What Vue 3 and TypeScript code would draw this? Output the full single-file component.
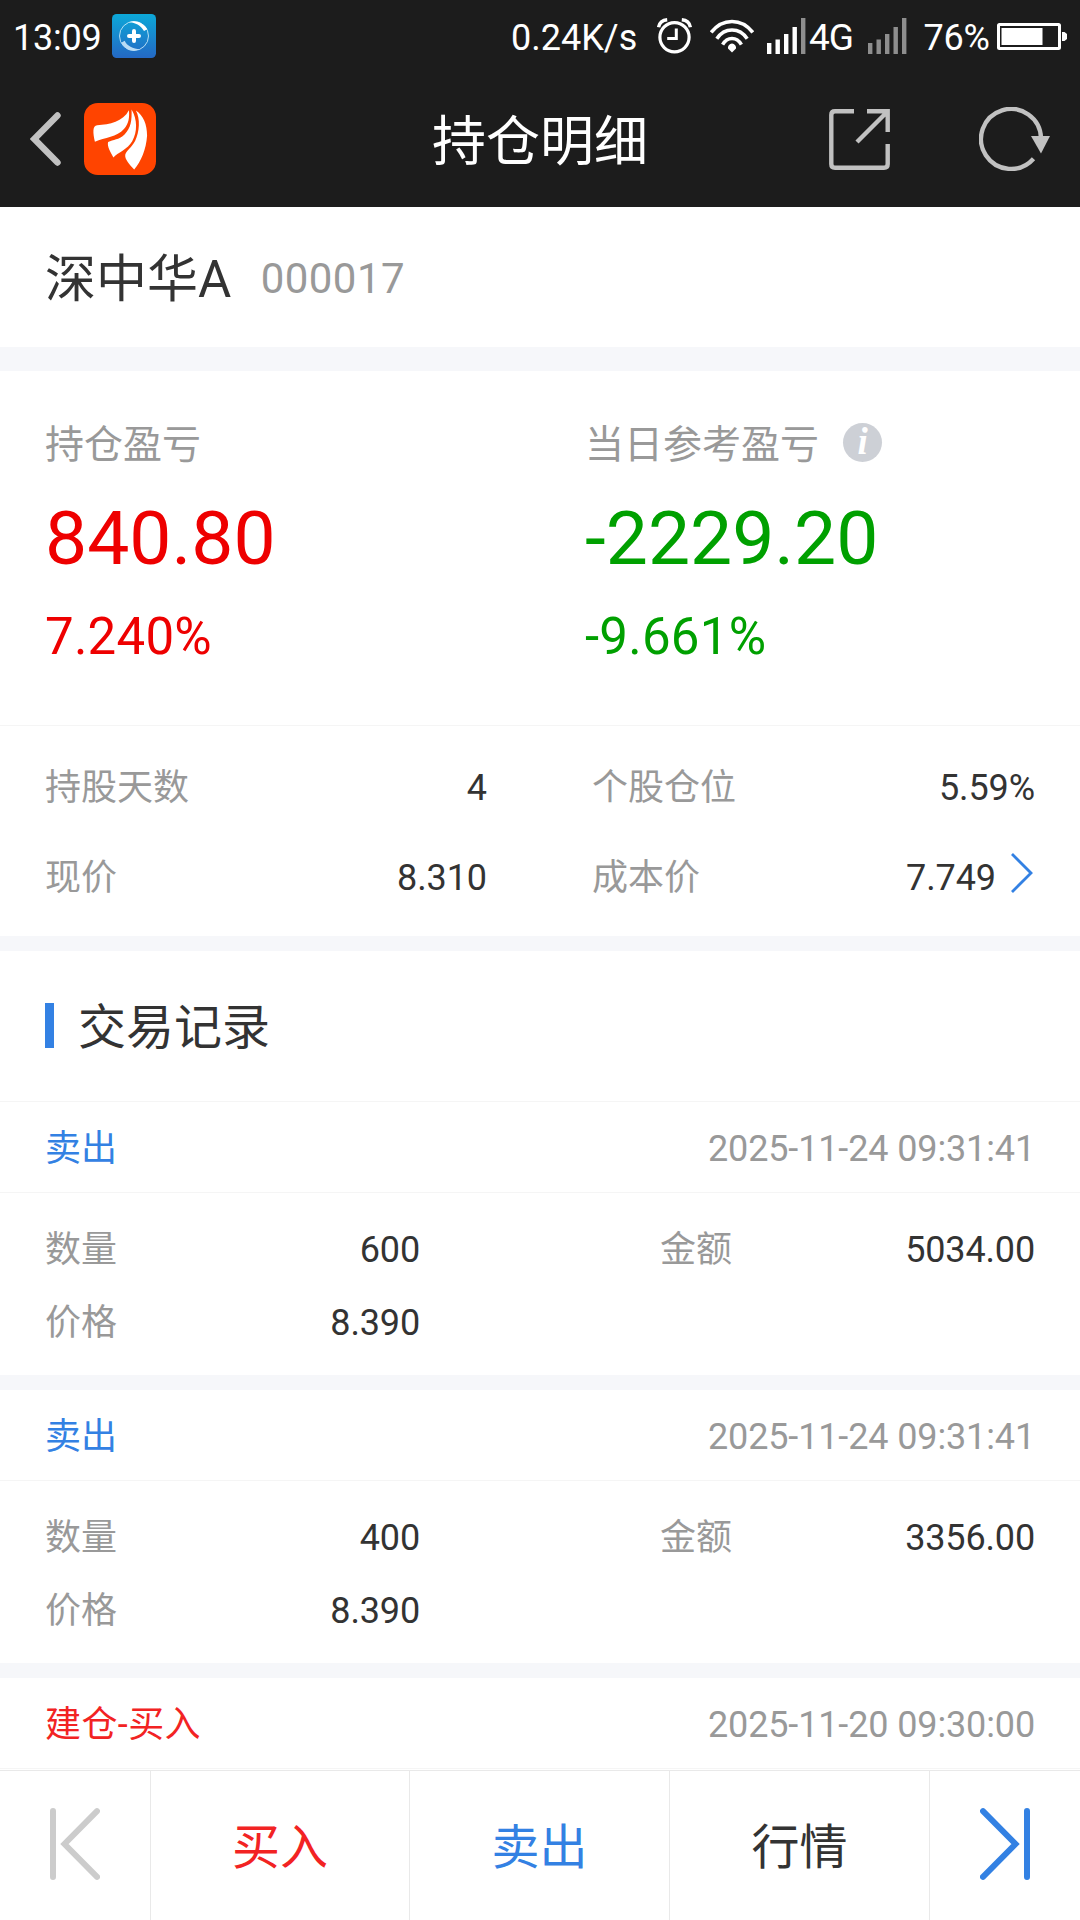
<script setup lang="ts">
interface Trade {
  id: number
  kind: 'buy' | 'sell'
  label: string
  time: string
  quantity?: string
  price?: string
  amount?: string
}

interface SignalBar {
  x: number
  y: number
}

const signalBars: SignalBar[] = [
  { x: 0, y: 25 },
  { x: 8.5, y: 21.5 },
  { x: 17, y: 16 },
  { x: 25.5, y: 9 },
  { x: 34, y: 0 },
]

const trades: Trade[] = [
  { id: 1, kind: 'sell', label: '卖出', time: '2025-11-24 09:31:41', quantity: '600', price: '8.390', amount: '5034.00' },
  { id: 2, kind: 'sell', label: '卖出', time: '2025-11-24 09:31:41', quantity: '400', price: '8.390', amount: '3356.00' },
  { id: 3, kind: 'buy', label: '建仓-买入', time: '2025-11-20 09:30:00' },
]
</script>

<template>
  <div class="screen">
    <header class="top">
      <div class="status">
        <span class="clock">13:09</span>
        <svg class="app-badge" viewBox="0 0 132 132">
          <defs>
            <linearGradient id="badge-fill" x1="0" y1="0" x2="0" y2="1">
              <stop offset="0" stop-color="#0ca8d8" />
              <stop offset="1" stop-color="#2468c4" />
            </linearGradient>
          </defs>
          <rect width="132" height="132" rx="14" fill="url(#badge-fill)" />
          <circle cx="66" cy="66" r="43.5" fill="none" stroke="#d4effa" stroke-width="2.5" />
          <path d="M52 24C72 17 96 28 106 46L96 51C86 34 70 26 52 24Z" fill="#fff" />
          <path d="M28 86L38 80C44 95 64 105 84 105C62 117 38 106 28 86Z" fill="#b9dcf5" />
          <path d="M66 51V81M51 66H81" stroke="#fff" stroke-width="12" stroke-linecap="round" />
        </svg>
        <span class="speed">0.24K/s</span>
        <svg class="alarm" viewBox="0 0 36 36" fill="none" stroke="#fff">
          <circle cx="17.5" cy="19.3" r="14.6" stroke-width="3.2" />
          <path d="M19.3 10.5V20.6H10.2" stroke-width="3" />
          <path d="M1.6 9.2C2.4 5 5.6 2.2 10.2 1.8M33.4 9.2C32.6 5 29.4 2.2 24.8 1.8" stroke-width="3.4" />
        </svg>
        <svg class="wifi" viewBox="0 0 44 34" fill="none" stroke="#fff" stroke-width="3.5">
          <path d="M1.2 13.4C12.5-1.2 31.5-1.2 42.8 13.4" />
          <path d="M6.8 19.8C14.5 8.2 29.5 8.2 37.2 19.8" />
          <path d="M12.6 25.6C17.2 17.4 26.8 17.4 31.4 25.6" />
          <path d="M22 33.5L18 29.6A4.1 4.1 0 1 1 26 29.6Z" fill="#fff" stroke="none" />
        </svg>
        <svg class="signal" viewBox="0 0 39 36">
          <rect
            v-for="(bar, i) in signalBars"
            :key="bar.x"
            :x="bar.x"
            :y="bar.y"
            width="4.4"
            :height="36 - bar.y"
            :fill="i < 4 ? '#fff' : '#8e8e8e'"
          />
        </svg>
        <span class="network">4G</span>
        <svg class="signal second" viewBox="0 0 39 36">
          <rect
            v-for="bar in signalBars"
            :key="bar.x"
            :x="bar.x"
            :y="bar.y"
            width="4.4"
            :height="36 - bar.y"
            fill="#8e8e8e"
          />
        </svg>
        <span class="percent">76%</span>
        <svg class="battery" viewBox="0 0 70 27">
          <rect x="1.5" y="1.5" width="61" height="24" rx="1" fill="none" stroke="#fff" stroke-width="3" />
          <rect x="4.5" y="5" width="41" height="17" fill="#fff" />
          <path d="M65 9H67.5L70 11V16L67.5 18H65Z" fill="#fff" />
        </svg>
      </div>

      <nav class="bar">
        <div class="bar-side">
          <svg class="back" viewBox="0 0 32 54" fill="none" stroke="#c1c1c1" stroke-width="6.4" stroke-linecap="round">
            <path d="M27.5 3.5L4.3 27L27.5 50.5" />
          </svg>
          <svg class="logo" viewBox="252 309 218 218">
            <rect x="252" y="309" width="218" height="218" rx="42" fill="#ff4400" />
            <g fill="#fff">
              <path d="M388 331C370 366 330 374 292 376C277 378 279 398 285 426C315 414 352 412 373 388C388 371 390 352 388 331Z" />
              <path d="M396 329C397 360 395 385 374 405C357 421 341 419 325 427C321 440 333 458 341 474C356 458 384 450 398 425C414 397 414 359 396 329Z" />
              <path d="M409 332C432 347 443 374 443 408C440 450 425 485 404 510C391 497 374 479 377 465C381 452 397 443 407 423C420 397 423 357 409 332Z" />
            </g>
          </svg>
        </div>
        <h1 class="title">持仓明细</h1>
        <div class="bar-side actions">
          <svg class="share" viewBox="0 0 61 61" fill="none" stroke="#c1c1c1" stroke-width="4.4">
            <path d="M25 2.3H6Q2.3 2.3 2.3 6V55Q2.3 58.7 6 58.7H55Q58.7 58.7 58.7 55V35M38 2.3H58.7V23M57 4L28 33" />
          </svg>
          <svg class="refresh" viewBox="0 0 72 64">
            <path d="M62 31A30 30 0 1 0 54.5 51.8" fill="none" stroke="#c1c1c1" stroke-width="4.4" />
            <path d="M52 29H71L62 46.5Z" fill="#c1c1c1" />
          </svg>
        </div>
      </nav>
    </header>

    <main class="content">
      <section class="stock">
        <span class="stock-name">深中华A</span>
        <span class="stock-code">000017</span>
      </section>

      <section class="profit">
        <div class="profit-col up">
          <div class="profit-label">持仓盈亏</div>
          <div class="profit-value">840.80</div>
          <div class="profit-rate">7.240%</div>
        </div>
        <div class="profit-col down">
          <div class="profit-label">
            <span>当日参考盈亏</span>
            <span class="info">i</span>
          </div>
          <div class="profit-value">-2229.20</div>
          <div class="profit-rate">-9.661%</div>
        </div>
      </section>

      <section class="facts">
        <div class="fact"><span class="key">持股天数</span><span>4</span></div>
        <div class="fact"><span class="key">个股仓位</span><span>5.59%</span></div>
        <div class="fact"><span class="key">现价</span><span>8.310</span></div>
        <div class="fact">
          <span class="key">成本价</span>
          <span>7.749</span>
          <svg class="more" viewBox="0 0 22 40" fill="none" stroke="#3381e3" stroke-width="2.8">
            <path d="M1 1L20 20L1 39" />
          </svg>
        </div>
      </section>

      <section class="records">
        <h2 class="records-title"><span>交易记录</span></h2>
        <article v-for="trade in trades" :key="trade.id" class="trade">
          <div class="trade-head">
            <span class="label" :class="trade.kind">{{ trade.label }}</span>
            <time class="key">{{ trade.time }}</time>
          </div>
          <div v-if="trade.quantity" class="trade-body">
            <div class="cell"><span class="key">数量</span><span class="num">{{ trade.quantity }}</span></div>
            <div class="cell"><span class="key">金额</span><span class="num">{{ trade.amount }}</span></div>
            <div class="cell"><span class="key">价格</span><span class="num">{{ trade.price }}</span></div>
          </div>
        </article>
      </section>
    </main>

    <footer class="toolbar">
      <button class="tool" type="button">
        <svg class="jump" viewBox="0 0 50 72" fill="none" stroke="#cccccc" stroke-width="6" stroke-linecap="round">
          <path d="M3 3V69M47 3.2L14.5 36L47 68.8" />
        </svg>
      </button>
      <button class="tool text buy" type="button">买入</button>
      <button class="tool text sell" type="button">卖出</button>
      <button class="tool text" type="button">行情</button>
      <button class="tool" type="button">
        <svg class="jump" viewBox="0 0 50 72" fill="none" stroke="#3381e3" stroke-width="6" stroke-linecap="round">
          <path d="M47 3V69M3 3.2L35.5 36L3 68.8" />
        </svg>
      </button>
    </footer>
  </div>
</template>

<style>
body {
  background: #fff;
}
</style>

<style scoped>
.screen {
  display: flex;
  flex-direction: column;
  width: 1080px;
  height: 1920px;
  overflow: hidden;
  background: #fff;
  color: #333;
  font-family: Roboto, 'Noto Sans CJK SC', sans-serif;
  font-size: 36px;
  line-height: 54px;
}

svg {
  display: block;
  flex: none;
}

.top {
  flex: none;
  height: 207px;
  background: #1c1c1c;
  color: #fff;
}

.status {
  display: flex;
  align-items: center;
  height: 72px;
  padding-left: 13px;
  white-space: nowrap;
}

.status span {
  flex: none;
  padding-top: 3px;
}

.clock {
  width: 99px;
  letter-spacing: -0.25px;
}

.app-badge {
  width: 44px;
  height: 44px;
}

.speed {
  width: 146px;
  margin-left: 355px;
}

.alarm {
  width: 36px;
  height: 36px;
  margin-right: 17px;
}

.wifi {
  width: 44px;
  height: 34px;
  margin-right: 13px;
}

.signal {
  width: 39px;
  height: 36px;
}

.network {
  width: 59px;
  margin-left: 3px;
  font-size: 37px;
  letter-spacing: -1px;
}

.percent {
  width: 73px;
  margin-left: 16.5px;
  letter-spacing: -0.2px;
}

.status .percent {
  padding-top: 4px;
}

.battery {
  width: 70px;
  height: 27px;
}

.bar {
  display: flex;
  align-items: center;
  justify-content: space-between;
  height: 134px;
}

.bar-side {
  display: flex;
  align-items: center;
  width: 251px;
}

.back {
  width: 32px;
  height: 54px;
  margin-left: 30px;
}

.logo {
  width: 72px;
  height: 72px;
  margin-left: 22px;
}

.title {
  margin: 0;
  padding-top: 7px;
  font-size: 54px;
  font-weight: 400;
  line-height: 80px;
}

.share {
  width: 61px;
  height: 61px;
}

.refresh {
  width: 72px;
  height: 64px;
  margin-left: 89px;
}

.content {
  flex: 1;
  min-height: 0;
  overflow: hidden;
}

.stock {
  display: flex;
  align-items: center;
  height: 140px;
  padding: 0 45px;
  border-bottom: 24px solid #f6f7fa;
}

.stock-name {
  padding-top: 6px;
  font-size: 51px;
  line-height: 72px;
}

.stock-code {
  margin-left: 29.5px;
  padding-top: 4px;
  color: #999;
  font-size: 42px;
  letter-spacing: 0.42px;
}

.profit {
  display: flex;
  height: 355px;
  padding-top: 38px;
  padding-left: 45px;
  border-bottom: 1px solid #f5f5f5;
  box-sizing: border-box;
}

.profit-col {
  flex: none;
  width: 540px;
}

.down.profit-col {
  width: 495px;
}

.profit-label {
  display: flex;
  align-items: center;
  height: 72px;
  color: #999;
  font-size: 39px;
}

.info {
  width: 39px;
  height: 39px;
  margin-bottom: 5px;
  margin-left: 24px;
  border-radius: 50%;
  background: #cdd0d6;
  color: #fff;
  font: italic bold 37px/37px 'Liberation Serif', serif;
  text-align: center;
}

.profit-value {
  font-size: 75px;
  line-height: 114px;
}

.profit-rate {
  font-size: 51px;
  line-height: 84px;
  letter-spacing: 0.25px;
}

.up .profit-value,
.up .profit-rate {
  color: #ee0000;
}

.down .profit-value,
.down .profit-rate {
  color: #00a000;
}

.facts {
  display: grid;
  grid-template-columns: 442px 443px;
  grid-auto-rows: 90px;
  column-gap: 105px;
  height: 225px;
  padding: 17px 45px 0;
  border-bottom: 15px solid #f6f7fa;
  box-sizing: border-box;
}

.fact {
  display: flex;
  align-items: center;
  justify-content: space-between;
  letter-spacing: -0.1px;
}

.fact .more {
  width: 22px;
  height: 40px;
  margin: 0 2px 10px 15px;
}

.fact .key {
  margin-right: auto;
  letter-spacing: 0;
}

.key {
  color: #999;
}

.records-title {
  display: flex;
  align-items: center;
  height: 151px;
  margin: 0;
  padding: 0 45px 1px;
  border-bottom: 1px solid #f5f5f5;
  box-sizing: border-box;
  font-size: 48px;
  font-weight: 400;
}

.records-title span {
  padding-top: 4px;
}

.records-title::before {
  content: '';
  width: 9px;
  height: 45px;
  margin-right: 24px;
  background: #3381e3;
}

.trade + .trade {
  border-top: 15px solid #f6f7fa;
}

.trade-head {
  display: flex;
  align-items: center;
  justify-content: space-between;
  height: 91px;
  padding: 4px 45px 0;
  border-bottom: 1px solid #f5f5f5;
  box-sizing: border-box;
}

.trade-head time {
  letter-spacing: -0.13px;
}

.label.buy {
  letter-spacing: 0.4px;
}

.trade-body {
  display: grid;
  grid-template-columns: 375px 375px;
  grid-auto-rows: 73px;
  justify-content: space-between;
  height: 182px;
  padding: 20px 45px 0;
  box-sizing: border-box;
}

.cell {
  display: flex;
  align-items: center;
  justify-content: space-between;
}

.num {
  letter-spacing: -0.15px;
}

.buy {
  color: #f22323;
}

.sell {
  color: #3381e3;
}

.toolbar {
  display: grid;
  flex: none;
  grid-template-columns: 150px 259px 260px 260px 151px;
  height: 150px;
  border-top: 1px solid #e9e9e9;
  box-sizing: border-box;
}

.tool {
  display: flex;
  align-items: center;
  justify-content: center;
  margin: 0;
  padding: 0;
  border: 0;
  background: #fff;
  color: #333;
  font: inherit;
  font-size: 48px;
}

.tool + .tool {
  border-left: 1px solid #e9e9e9;
}

.tool.text {
  padding-top: 4px;
}

.tool.buy {
  color: #f22323;
}

.tool.sell {
  color: #3381e3;
}

.jump {
  width: 50px;
  height: 72px;
  margin-bottom: 3px;
}
</style>
